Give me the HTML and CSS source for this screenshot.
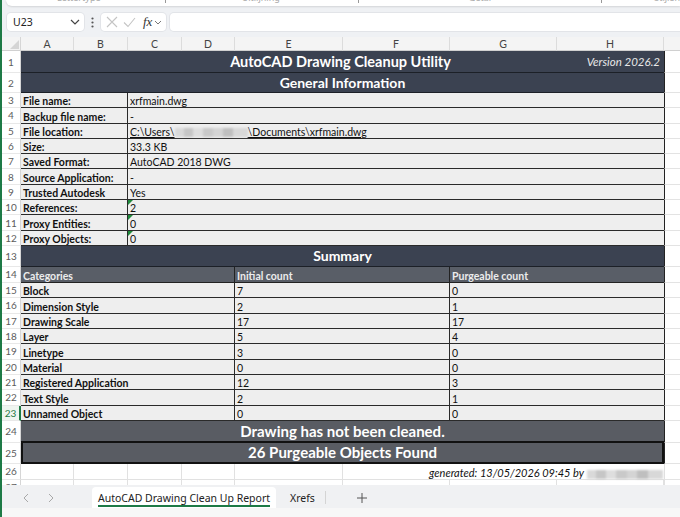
FILE: index.html
```html
<!DOCTYPE html>
<html lang="en">
  <head>
    <meta charset="UTF-8" />
    <title>AutoCAD Drawing Clean Up Report</title>
    <link rel="stylesheet" href="styles.css">
  </head>
  <body>
    <!-- ribbon (only its lower edge is on screen) -->
    <div class="ribbon">
      <span class="group g1">Lettertype</span><span class="launch l1"></span>
      <span class="group g2">Uitlijning</span><span class="launch l2"></span>
      <span class="group g3">Getal</span><span class="launch l3"></span>
      <span class="group g4">Stijlen</span>
    </div>

    <!-- name box + formula bar -->
    <div class="formula-bar">
      <div class="name-box">
        <span>U23</span>
        <svg width="10" height="6" viewBox="0 0 10 6"><path d="M1 1l4 4 4-4" fill="none" stroke="#444" stroke-width="1.2"/></svg>
      </div>
      <div class="dots">
        <svg width="3" height="11" viewBox="0 0 3 11"><circle cx="1.5" cy="1.5" r="1.1" fill="#555"/><circle cx="1.5" cy="5.5" r="1.1" fill="#555"/><circle cx="1.5" cy="9.5" r="1.1" fill="#555"/></svg>
      </div>
      <div class="fx-box">
        <svg width="12" height="12" viewBox="0 0 12 12"><path d="M1 1l10 10M11 1L1 11" stroke="#c4c4c4" stroke-width="1.1"/></svg>
        <svg width="13" height="12" viewBox="0 0 13 12"><path d="M1 6.5l4 4L12 2" fill="none" stroke="#c4c4c4" stroke-width="1.1"/></svg>
        <span class="fx">fx</span>
        <svg width="8" height="5" viewBox="0 0 8 5"><path d="M1 1l3 3 3-3" fill="none" stroke="#777" stroke-width="1"/></svg>
      </div>
      <div class="formula-input"></div>
    </div>

    <!-- worksheet -->
    <div class="sheet">
      <!-- column headers -->
      <div class="corner"><svg width="9" height="9" viewBox="0 0 9 9"><path d="M9 0v9H0z" fill="#d5d5d5"/></svg></div>
      <div class="ch">A</div><div class="ch">B</div><div class="ch">C</div><div class="ch">D</div>
      <div class="ch">E</div><div class="ch">F</div><div class="ch">G</div><div class="ch">H</div>
      <div class="ch last"></div>

      <!-- 1 -->
      <div class="rh">1</div>
      <div class="band title">
        <span></span>
        <span class="title-text">AutoCAD Drawing Cleanup Utility</span>
        <span class="version">Version 2026.2</span>
      </div>
      <div class="pad"></div>

      <!-- 2 -->
      <div class="rh">2</div>
      <div class="band">General Information</div>
      <div class="pad"></div>

      <div class="rh">3</div><div class="cell label">File name:</div><div class="cell value">xrfmain.dwg</div><div class="pad"></div>
      <div class="rh">4</div><div class="cell label">Backup file name:</div><div class="cell value">-</div><div class="pad"></div>
      <div class="rh">5</div><div class="cell label">File location:</div>
      <div class="cell value"><span class="link">C:\Users\<span class="hidden-name"></span>\Documents\xrfmain.dwg</span></div><div class="pad"></div>
      <div class="rh">6</div><div class="cell label">Size:</div><div class="cell value">33.3 KB</div><div class="pad"></div>
      <div class="rh">7</div><div class="cell label">Saved Format:</div><div class="cell value">AutoCAD 2018 DWG</div><div class="pad"></div>
      <div class="rh">8</div><div class="cell label">Source Application:</div><div class="cell value">-</div><div class="pad"></div>
      <div class="rh">9</div><div class="cell label">Trusted Autodesk</div><div class="cell value">Yes</div><div class="pad"></div>
      <div class="rh">10</div><div class="cell label">References:</div><div class="cell value flag">2</div><div class="pad"></div>
      <div class="rh">11</div><div class="cell label">Proxy Entities:</div><div class="cell value flag">0</div><div class="pad"></div>
      <div class="rh">12</div><div class="cell label">Proxy Objects:</div><div class="cell value flag">0</div><div class="pad"></div>

      <!-- 13 -->
      <div class="rh">13</div>
      <div class="band">Summary</div>
      <div class="pad"></div>

      <div class="rh">14</div>
      <div class="head cat">Categories</div><div class="head num">Initial count</div><div class="head num">Purgeable count</div>
      <div class="pad"></div>

      <div class="rh">15</div><div class="cell cat">Block</div><div class="cell num">7</div><div class="cell num">0</div><div class="pad"></div>
      <div class="rh">16</div><div class="cell cat">Dimension Style</div><div class="cell num">2</div><div class="cell num">1</div><div class="pad"></div>
      <div class="rh">17</div><div class="cell cat">Drawing Scale</div><div class="cell num">17</div><div class="cell num">17</div><div class="pad"></div>
      <div class="rh">18</div><div class="cell cat">Layer</div><div class="cell num">5</div><div class="cell num">4</div><div class="pad"></div>
      <div class="rh">19</div><div class="cell cat">Linetype</div><div class="cell num">3</div><div class="cell num">0</div><div class="pad"></div>
      <div class="rh">20</div><div class="cell cat">Material</div><div class="cell num">0</div><div class="cell num">0</div><div class="pad"></div>
      <div class="rh">21</div><div class="cell cat">Registered Application</div><div class="cell num">12</div><div class="cell num">3</div><div class="pad"></div>
      <div class="rh">22</div><div class="cell cat">Text Style</div><div class="cell num">2</div><div class="cell num">1</div><div class="pad"></div>
      <div class="rh active">23</div><div class="cell cat">Unnamed Object</div><div class="cell num">0</div><div class="cell num">0</div><div class="pad"></div>

      <!-- 24, 25 -->
      <div class="rh">24</div>
      <div class="status-band first">Drawing has not been cleaned.</div>
      <div class="pad"></div>
      <div class="rh">25</div>
      <div class="status-band second">26 Purgeable Objects Found</div>
      <div class="pad"></div>

      <!-- 26 -->
      <div class="rh">26</div>
      <div class="grid"></div><div class="grid"></div><div class="grid"></div><div class="grid"></div><div class="grid"></div>
      <div class="grid footer">generated: 13/05/2026 09:45 by <span class="hidden-name short"></span></div>
      <div class="pad"></div>

      <!-- 27 -->
      <div class="rh">27</div>
      <div class="grid"></div><div class="grid"></div><div class="grid"></div><div class="grid"></div>
      <div class="grid"></div><div class="grid"></div><div class="grid"></div><div class="grid"></div>
      <div class="pad"></div>
    </div>

    <!-- sheet tabs -->
    <div class="tabs">
      <div class="tab-nav">
        <svg width="6" height="10" viewBox="0 0 6 10"><path d="M5 1L1 5l4 4" fill="none" stroke="#a8a8a8" stroke-width="1"/></svg>
        <svg width="6" height="10" viewBox="0 0 6 10"><path d="M1 1l4 4-4 4" fill="none" stroke="#a8a8a8" stroke-width="1"/></svg>
      </div>
      <div class="tab active"><span>AutoCAD Drawing Clean Up Report</span></div>
      <div class="tab">Xrefs</div>
      <div class="tab-add">
        <svg width="10" height="10" viewBox="0 0 10 10"><path d="M5 0v10M0 5h10" stroke="#555" stroke-width="1"/></svg>
      </div>
    </div>

    <!-- status bar (cut off at the bottom) -->
    <div class="statusbar">
      <svg width="9" height="9" viewBox="0 0 9 9"><rect x="1.5" y="3" width="6" height="6" rx="1" fill="none" stroke="#666"/><path d="M3 3V1.5h3V3" fill="none" stroke="#666"/></svg>
    </div>
  </body>
</html>
```

FILE: styles.css
```css
* {
  margin: 0;
  padding: 0;
  box-sizing: border-box;
}
body {
  width: 680px;
  height: 517px;
  overflow: hidden;
  background: #eff1f4;
  border-left: 2px solid #1e7a46;
  font-family: Lato, "Liberation Sans", sans-serif;
  color: #111;
}

/* ribbon edge: only the bottom of the group captions shows */
.ribbon {
  height: 6px;
  margin-left: 4px;
  background: #fff;
  border-radius: 0 0 0 7px;
  box-shadow: 0 1px 2px rgba(0, 0, 0, 0.12);
  display: flex;
  overflow: hidden;
  font-family: "Noto Sans", sans-serif;
  font-size: 9px;
  color: #aaa;
  line-height: 9px;
}
.group {
  margin-top: -7px;
}
.launch {
  width: 6px;
  height: 3px;
  border-left: 1px solid #999;
  border-bottom: 1px solid #999;
}
.g1 { margin-left: 51px; }
.l1 { margin-left: 64px; }
.g2 { margin-left: 76px; }
.l2 { margin-left: 78px; }
.g3 { margin-left: 110px; }
.l3 { margin-left: 110px; }
.g4 { margin-left: 52px; }

/* formula bar */
.formula-bar {
  height: 31px;
  display: flex;
  align-items: flex-start;
  padding-top: 7px;
  padding-left: 5px;
}
.name-box {
  width: 77px;
  height: 18px;
  background: #fff;
  border-radius: 4px;
  box-shadow: 0 0 0 1px #e2e4e8;
  display: flex;
  align-items: center;
  justify-content: space-between;
  padding: 0 4px 0 6px;
  font-family: "Noto Sans", sans-serif;
  font-size: 10.5px;
  color: #222;
}
.dots {
  width: 17px;
  height: 18px;
  display: flex;
  align-items: center;
  justify-content: center;
}
.fx-box {
  width: 65px;
  height: 18px;
  background: #fff;
  border-radius: 4px;
  box-shadow: 0 0 0 1px #e2e4e8;
  display: flex;
  align-items: center;
  gap: 5px;
  padding-left: 5px;
}
.fx {
  font-family: "Liberation Serif", serif;
  font-style: italic;
  font-size: 13px;
  color: #333;
  margin-left: 2px;
  margin-right: -3px;
}
.formula-input {
  flex: 1;
  height: 18px;
  margin-left: 4px;
  background: #fff;
  border-radius: 4px 0 0 4px;
  box-shadow: 0 0 0 1px #e2e4e8;
}

/* worksheet grid */
.sheet {
  height: 448px;
  overflow: hidden;
  background: #fff;
  display: grid;
  grid-template-columns: 19px 53px 54px 54px 53px 108px 107px 107px 107px 1fr;
  grid-template-rows:
    14px 22px 20px repeat(10, 15.3px) 21px 16px repeat(9, 15.33px)
    22px 21px 16px 16px;
}
.corner {
  background: #f4f4f4;
  border-right: 1px solid #d6d6d6;
  border-bottom: 1px solid #d0d0d0;
  display: flex;
  align-items: flex-end;
  justify-content: flex-end;
  padding: 0 1px 1px 0;
}
.ch {
  background: #f4f4f4;
  border-right: 1px solid #dcdcdc;
  border-bottom: 1px solid #d0d0d0;
  font-size: 10.5px;
  color: #444;
  text-align: center;
  line-height: 14px;
}
.ch.last {
  border-right: none;
}
.rh {
  background: #fff;
  border-right: 1px solid #d6d6d6;
  border-bottom: 1px solid #e8e8e8;
  font-size: 10px;
  color: #5c5c5c;
  display: flex;
  align-items: center;
  justify-content: center;
}
.rh.active {
  color: #1e7a46;
  background: #eef5f0;
  border-right: 2px solid #1e7a46;
}
.pad {
  border-bottom: 1px solid #e3e3e3;
  border-left: 1px solid #222;
}

/* dark section bands */
.band {
  grid-column: 2 / span 8;
  background: #3b4251;
  color: #fff;
  font-weight: 700;
  font-size: 14px;
  border-bottom: 1px solid #1c2027;
  display: flex;
  align-items: center;
  justify-content: center;
}
.band.title {
  display: grid;
  grid-template-columns: 1fr auto 1fr;
  align-items: center;
  padding-right: 4px;
}
.title-text {
  font-size: 14.5px;
}
.version {
  justify-self: end;
  font-style: italic;
  font-weight: 400;
  font-size: 11.5px;
  color: #e8e8e8;
}

/* info and summary rows */
.cell {
  background: #eeeeee;
  border-bottom: 1px solid #2a2a2a;
  border-right: 1px solid #2a2a2a;
  font-size: 10.5px;
  line-height: 12px;
  padding-left: 2px;
  display: flex;
  align-items: flex-end;
  white-space: nowrap;
  position: relative;
}
.label {
  grid-column: span 2;
  font-weight: 700;
}
.value {
  grid-column: span 6;
  border-right: none;
}
.cat {
  grid-column: span 4;
  font-weight: 700;
}
.num {
  grid-column: span 2;
}
.cell.num + .cell.num {
  border-right: none;
}
.head {
  background: #595e67;
  color: #ececec;
  font-weight: 700;
  font-size: 10.5px;
  line-height: 12px;
  padding-left: 2px;
  display: flex;
  align-items: flex-end;
  border-bottom: 1px solid #222;
  border-right: 1px solid #222;
}
.head.num + .head.num {
  border-right: none;
}
.flag::before {
  content: "";
  position: absolute;
  left: 0;
  top: 0;
  border-top: 5px solid #1f8a3c;
  border-right: 5px solid transparent;
}
.link {
  text-decoration: underline;
}
.hidden-name {
  display: inline-block;
  width: 73px;
  height: 9px;
  vertical-align: -1px;
  background:
    linear-gradient(90deg, #d9d9d9 0 12%, #c6c6c6 12% 25%, #dedede 25% 38%, #c9c9c9 38% 52%, #d4d4d4 52% 66%, #bfbfbf 66% 80%, #d8d8d8 80% 100%);
  filter: blur(1px);
}
.hidden-name.short {
  width: 76px;
}

/* result bands */
.status-band {
  grid-column: 2 / span 8;
  background: #595c63;
  color: #fff;
  font-weight: 700;
  font-size: 15px;
  display: flex;
  align-items: center;
  justify-content: center;
}
.status-band.first {
  border-bottom: 2px solid #111;
}
.status-band.second {
  border: 2px solid #111;
  border-top: none;
}

/* empty cells below the report */
.grid {
  border-right: 1px solid #e1e1e1;
  border-bottom: 1px solid #e1e1e1;
}
.footer {
  grid-column: span 3;
  display: flex;
  align-items: flex-end;
  justify-content: flex-end;
  gap: 3px;
  font-style: italic;
  font-size: 11px;
  line-height: 13px;
  padding-right: 1px;
  white-space: nowrap;
  border-right: none;
}
.sheet > .grid + .pad {
  border-left: 1px solid #e1e1e1;
}

/* sheet tabs */
.tabs {
  height: 23px;
  display: flex;
  align-items: flex-end;
  background: #f0f1f3;
  font-family: "Noto Sans", sans-serif;
  font-size: 10.5px;
  color: #222;
  white-space: nowrap;
}
.tab-nav {
  width: 88px;
  height: 21px;
  display: flex;
  align-items: center;
  gap: 19px;
  padding-left: 21px;
}
.tab {
  display: flex;
  align-items: center;
  padding: 0 10px 0 14px;
  border-right: 1px solid #d4d4d4;
  height: 13px;
  align-self: center;
  margin-top: 2px;
}
.tab.active {
  background: #fff;
  border-radius: 4px 4px 0 0;
  border-right: none;
  height: 21px;
  margin: 0 0 0 2px;
  padding: 0 6px;
  align-self: flex-end;
  width: 184px;
}
.tab.active span {
  border-bottom: 2px solid #1e7a46;
  padding-top: 3px;
  line-height: 14px;
}
.tab-add {
  height: 21px;
  display: flex;
  align-items: center;
  padding-left: 31px;
}

/* status bar */
.statusbar {
  height: 9px;
  overflow: hidden;
  background: #f7f7f7;
  padding: 3px 0 0 59px;
}
```
